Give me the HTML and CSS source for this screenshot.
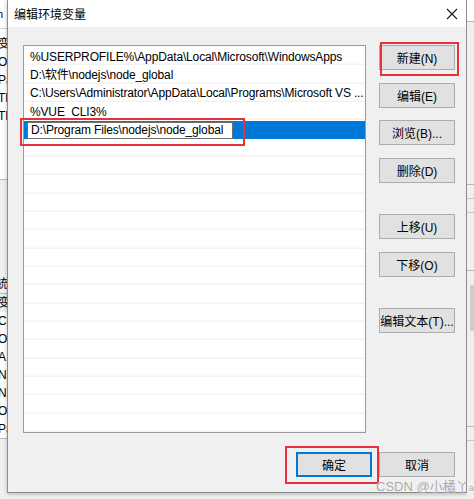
FILE: index.html
```html
<!DOCTYPE html>
<html lang="zh-CN">
<head>
<meta charset="utf-8">
<title>编辑环境变量</title>
<link rel="stylesheet" href="styles.css">
</head>
<body>
<div class="screen">
  <div class="bg-left">
    <div class="bl-title">n</div>
    <div class="bl-rows">
      <div class="bl-row">变</div>
      <div class="bl-row">O</div>
      <div class="bl-row">Pa</div>
      <div class="bl-row">TE</div>
      <div class="bl-row">TN</div>
    </div>
    <div class="bl-gap"></div>
    <div class="bl-head">統</div>
    <div class="bl-rows bl-rows2">
      <div class="bl-row sel">变</div>
      <div class="bl-row">Co</div>
      <div class="bl-row">Or</div>
      <div class="bl-row">A</div>
      <div class="bl-row">N</div>
      <div class="bl-row">N</div>
      <div class="bl-row">O</div>
      <div class="bl-row">Pa</div>
    </div>
  </div>

  <div class="dialog">
    <div class="titlebar">
      <span class="title">编辑环境变量</span>
      <svg class="close" width="12" height="12" viewBox="0 0 12 12"><path d="M1 1 L11 11 M11 1 L1 11" stroke="#1a1a1a" stroke-width="1.1" fill="none"/></svg>
    </div>
    <div class="body">
      <div class="main">
        <div class="list">
          <div class="item">%USERPROFILE%\AppData\Local\Microsoft\WindowsApps</div>
          <div class="item">D:\软件\nodejs\node_global</div>
          <div class="item">C:\Users\Administrator\AppData\Local\Programs\Microsoft VS ...</div>
          <div class="item">%VUE_CLI3%</div>
          <div class="item selected"><div class="editbox">D:\Program Files\nodejs\node_global</div></div>
        </div>
        <div class="buttons">
          <button class="btn">新建(N)</button>
          <button class="btn">编辑(E)</button>
          <button class="btn">浏览(B)...</button>
          <button class="btn">删除(D)</button>
          <button class="btn gap-big">上移(U)</button>
          <button class="btn">下移(O)</button>
          <button class="btn gap-big">编辑文本(T)...</button>
        </div>
      </div>
      <div class="footer">
        <button class="btn default">确定</button>
        <button class="btn">取消</button>
      </div>
    </div>
  </div>

  <div class="bg-right">
    <div class="br-top"></div>
    <div class="br-a"></div>
    <div class="br-row"></div>
    <div class="br-row"></div>
    <div class="br-b"></div>
    <div class="br-thumb"></div>
    <div class="br-c"></div>
    <div class="br-row"></div>
  </div>

  <div class="mark mark-new"></div>
  <div class="mark mark-edit"></div>
  <div class="mark mark-ok"></div>
  <div class="watermark">CSDN @小橘丫<small>a</small></div>
</div>
</body>
</html>
```

FILE: styles.css
```css
* { box-sizing: border-box; }

html, body {
  margin: 0;
  padding: 0;
  background: #f0f0f0;
}

body {
  font-family: "Liberation Sans", "Noto Sans CJK SC", sans-serif;
  font-size: 12px;
  color: #000;
}

.screen {
  position: relative;
  width: 474px;
  height: 499px;
  overflow: hidden;
  display: flex;
  align-items: flex-start;
  background: #f0f0f0;
}

/* background window, left */
.bg-left {
  flex: none;
  width: 7px;
  height: 499px;
  overflow: hidden;
  display: flex;
  flex-direction: column;
  background: #f0f0f0;
  white-space: nowrap;
}
.bl-title {
  height: 28px;
  line-height: 28px;
  background: #fff;
  font-size: 11px;
  text-indent: -3px;
}
.bl-rows {
  background: #fff;
  border-top: 1px solid #d0d0d0;
  padding-top: 6px;
}
.bl-row {
  height: 18px;
  line-height: 18px;
  font-size: 12px;
  text-indent: -2px;
}
.bl-gap {
  height: 55px;
  background: #fff;
  border-bottom: 1px solid #b8b8b8;
}
.bl-head {
  margin-top: 94px;
  height: 20px;
  line-height: 20px;
  text-indent: -4px;
  border-bottom: 1px solid #b8b8b8;
}
.bl-rows2 {
  border-top: none;
  padding-top: 0;
  border-bottom: 1px solid #b8b8b8;
}
.bl-row.sel { background: #e6f2ec; }

/* dialog */
.dialog {
  flex: none;
  width: 460px;
  height: 493px;
  border: 1px solid #8c8c8c;
  border-top: none;
  background: #f0f0f0;
  display: flex;
  flex-direction: column;
  box-shadow: 0 1px 4px rgba(0,0,0,0.25);
}

.titlebar {
  flex: none;
  height: 27px;
  background: #fff;
  display: flex;
  align-items: center;
  justify-content: space-between;
  padding: 0 8px 0 6px;
}
.title {
  font-size: 12px;
  color: #000;
}
.close { display: block; }

.body {
  flex: 1;
  display: flex;
  flex-direction: column;
  padding: 18px 11px 15px 15px;
}

.main {
  display: flex;
  gap: 13px;
}

.list {
  flex: none;
  width: 343px;
  height: 388px;
  border: 1px solid #9a9a9a;
  padding-top: 1.7px;
  background-color: #fff;
  background-image: repeating-linear-gradient(to bottom,
      transparent 0, transparent 17.333px,
      #ededed 17.333px, #ededed 18.333px);
  background-position: 0 1.7px;
  background-origin: border-box;
  overflow: hidden;
  letter-spacing: -0.15px;
}

.item {
  height: 18.333px;
  line-height: 18px;
  padding-left: 6px;
  white-space: nowrap;
  overflow: hidden;
}
.item.selected {
  background: #0078d7;
  padding-left: 3px;
  padding-top: 1px;
}
.editbox {
  width: 206px;
  height: 16.5px;
  line-height: 15px;
  background: #fff;
  border: 1px solid #6f6f6f;
  padding-left: 3px;
}

.buttons {
  flex: none;
  width: 76px;
  display: flex;
  flex-direction: column;
  gap: 12.5px;
}
.buttons .gap-big { margin-top: 19px; }

.btn {
  font-family: "Liberation Sans", "Noto Sans CJK SC", sans-serif;
  font-size: 12px;
  color: #000;
  height: 25px;
  width: 76px;
  padding: 0;
  background: #e1e1e1;
  border: 1px solid #adadad;
  border-radius: 0;
}
.btn.default {
  border: 2px solid #0078d7;
}

.footer {
  margin-top: auto;
  display: flex;
  justify-content: flex-end;
  gap: 7px;
}

/* background window, right */
.bg-right {
  flex: none;
  width: 7px;
  height: 499px;
  display: flex;
  flex-direction: column;
  background: #f0f0f0;
}
.br-top { height: 22px; background: #fff; border-bottom: 1px solid #b4b4b4; }
.br-a { height: 163px; border-bottom: 1px solid #b4b4b4; }
.br-row { height: 14px; border-bottom: 1px solid #c8c8c8; }
.br-b { height: 58px; border-bottom: 1px solid #b4b4b4; }
.br-thumb {
  margin: 14px 0 0 3px;
  width: 4px;
  height: 46px;
  background: #cdcdcd;
}
.br-c { height: 96px; border-bottom: 1px solid #b4b4b4; }

/* annotations */
.mark {
  position: absolute;
  border: 2px solid #e5323a;
  pointer-events: none;
}
.mark-new { left: 380px; top: 42px; width: 79px; height: 34px; }
.mark-edit { left: 20px; top: 118px; width: 225px; height: 28px; }
.mark-ok { left: 285px; top: 446px; width: 94px; height: 38px; }

.watermark {
  position: absolute;
  left: 376px;
  top: 476px;
  font-family: "Liberation Sans", "Noto Sans CJK SC", sans-serif;
  font-size: 13px;
  color: rgba(150,150,150,0.85);
  white-space: nowrap;
  text-shadow: 0 0 1px #fff;
}
.watermark small { font-size: 9px; }
```
